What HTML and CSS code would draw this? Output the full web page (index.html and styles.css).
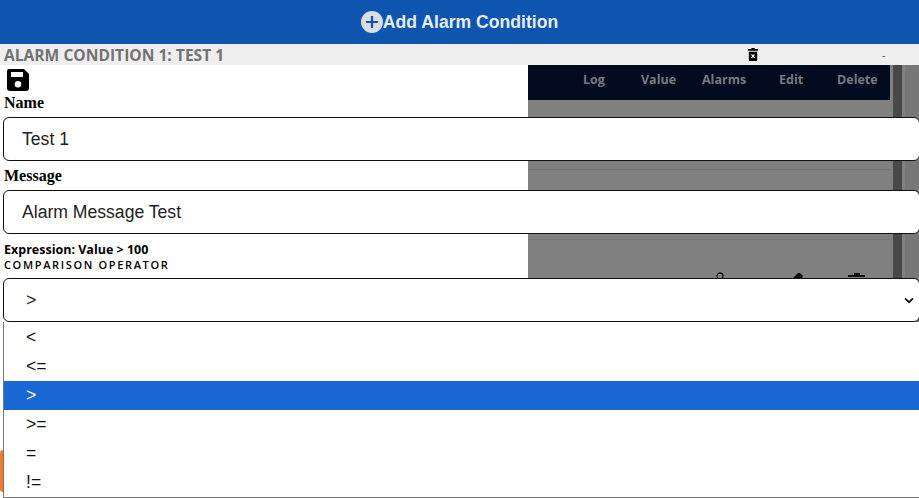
FILE: index.html
```html
<!DOCTYPE html>
<html lang="en">
<head>
  <meta charset="UTF-8">
  <meta name="viewport" content="width=device-width, initial-scale=1.0">
  <title>Add Alarm Condition</title>
  <link rel="stylesheet" href="styles.css">
</head>
<body>
  <div class="add-bar">
    <svg class="add-icon" viewBox="0 0 24 24" width="22" height="22">
      <circle cx="12" cy="12" r="12" fill="#d9dde3"/>
      <path d="M12 5.500v13M5.500 12h13" stroke="#0d55ae" stroke-width="2.400" fill="none"/>
    </svg>
    <span>Add Alarm Condition</span>
  </div>

  <div class="condition-bar">
    <span class="condition-title">ALARM CONDITION 1: TEST 1</span>
    <svg class="condition-delete" viewBox="0 0 12 14" width="10" height="13" preserveAspectRatio="none">
      <path d="M4 0h4v1h4v2H0V1h4z" fill="#000"/>
      <path d="M1 4h10v9a1 1 0 0 1-1 1H2a1 1 0 0 1-1-1z" fill="#000"/>
      <path d="M4.200 7l3.600 3.600M7.800 7l-3.600 3.600" stroke="#fff" stroke-width="1.400"/>
    </svg>
    <span class="condition-collapse">-</span>
  </div>

  <div class="content">
    <!-- dimmed page behind the form -->
    <div class="backdrop">
      <div class="table-head">
        <span class="col-log">Log</span>
        <span class="col-value">Value</span>
        <span class="col-alarms">Alarms</span>
        <span class="col-edit">Edit</span>
        <span class="col-delete">Delete</span>
      </div>
      <div class="row-line line-one"></div>
      <div class="row-line line-two"></div>
      <div class="scroll-track"></div>
      <div class="scroll-side"></div>
      <svg class="row-icons" viewBox="0 0 150 8" width="150" height="8">
        <circle cx="4" cy="5" r="3" fill="none" stroke="#111" stroke-width="1.300"/>
        <path d="M77 7l5-5h2l3 3-1 2z" fill="#111"/>
        <path d="M132 4h17v2h-17zM138 2h6v2h-6z" fill="#111"/>
      </svg>
    </div>
    <div class="orange-tab"></div>

    <form class="form">
      <svg class="save-icon" viewBox="0 0 24 24" width="24" height="24">
        <path fill-rule="evenodd" d="M3 1h15l5 5v14a3 3 0 0 1-3 3H4a3 3 0 0 1-3-3V3a2 2 0 0 1 2-2zM5 4v5h12V4zM12 13a3.300 3.300 0 1 0 0 6.600a3.300 3.300 0 0 0 0-6.600z" fill="#000"/>
      </svg>
      <label class="field-label">Name</label>
      <div class="text-box">Test 1</div>
      <label class="field-label label-message">Message</label>
      <div class="text-box">Alarm Message Test</div>
      <div class="expression">Expression: Value &gt; 100</div>
      <div class="operator-label">COMPARISON OPERATOR</div>
      <div class="select-box">
        <span>&gt;</span>
        <svg class="chevron" viewBox="0 0 12 8" width="10" height="7">
          <path d="M1.200 1.500L6 6l4.800-4.500" fill="none" stroke="#111" stroke-width="2.200"/>
        </svg>
      </div>
      <ul class="options">
        <li>&lt;</li>
        <li>&lt;=</li>
        <li class="selected">&gt;</li>
        <li>&gt;=</li>
        <li>=</li>
        <li>!=</li>
      </ul>
    </form>
  </div>
</body>
</html>
```

FILE: styles.css
```css
html, body {
  margin: 0;
  height: 498px;
  overflow: hidden;
  background-color: #fff;
}

body {
  font-family: "Liberation Sans", Arial, sans-serif;
  width: 919px;
}

.add-bar {
  height: 44px;
  display: flex;
  justify-content: center;
  align-items: center;
  background-color: #0d55ae;
  color: #e8eef6;
  font-size: 17.6px;
  font-weight: bold;
}

.add-icon {
  display: block;
}

.condition-bar {
  height: 21px;
  display: flex;
  align-items: center;
  background-color: #eee;
  padding-left: 4px;
}

.condition-title {
  width: 744px;
  font-family: "Open Sans", sans-serif;
  font-size: 15.6px;
  font-weight: 700;
  color: #727272;
  white-space: nowrap;
}

.condition-delete {
  display: block;
}

.condition-collapse {
  margin-left: 124px;
  font-size: 11px;
  color: #555;
}

.content {
  position: relative;
  height: 433px;
}

.backdrop {
  position: absolute;
  top: 0;
  bottom: 0;
  left: 528px;
  right: 0;
  background-color: #808080;
}

.table-head {
  position: relative;
  width: 362px;
  height: 35px;
  background-color: #020a20;
  font-family: "Open Sans", sans-serif;
  font-size: 12.500px;
  font-weight: 700;
  line-height: 29px;
  color: #777a84;
}

.table-head span {
  position: absolute;
  top: 0;
}

.col-log { left: 55px; }
.col-value { left: 113px; }
.col-alarms { left: 174px; }
.col-edit { left: 251px; }
.col-delete { left: 309px; }

.row-line {
  position: absolute;
  left: 0;
  width: 362px;
  height: 1px;
  background-color: #747474;
}

.line-one { top: 104px; }
.line-two { top: 174px; }

.scroll-track {
  position: absolute;
  top: 0;
  bottom: 0;
  left: 365px;
  width: 9px;
  background-color: #484848;
}

.scroll-side {
  position: absolute;
  top: 0;
  bottom: 0;
  left: 377px;
  right: 0;
  background-color: #777;
}

.row-icons {
  position: absolute;
  top: 206px;
  left: 188px;
}

.orange-tab {
  position: absolute;
  left: 0;
  top: 385px;
  width: 6px;
  height: 42px;
  border-radius: 4px;
  background-color: #f47a2a;
}

.form {
  position: relative;
  width: 917px;
  margin: 0;
  padding-left: 3px;
}

.save-icon {
  display: block;
  margin-left: 3px;
  padding-top: 3px;
}

.field-label {
  display: block;
  height: 16px;
  margin: 3px 0 6px;
  padding-left: 1px;
  font-family: "Liberation Serif", "Times New Roman", serif;
  font-size: 16px;
  font-weight: bold;
  line-height: 16px;
  color: #000;
}

.label-message {
  margin-top: 7px;
}

.text-box {
  box-sizing: border-box;
  height: 44px;
  padding-left: 18px;
  border: 1px solid #111;
  border-radius: 6px;
  background-color: #fff;
  font-size: 17.6px;
  line-height: 42px;
  color: #222;
}

.expression {
  margin-top: 8px;
  height: 15px;
  padding-left: 1px;
  font-family: "Open Sans", sans-serif;
  font-size: 12.500px;
  font-weight: 700;
  line-height: 16px;
  color: #000;
}

.operator-label {
  height: 21px;
  padding-left: 1px;
  font-family: "Open Sans", sans-serif;
  font-size: 11px;
  font-weight: 600;
  letter-spacing: 1.650px;
  line-height: 16px;
  color: #000;
}

.select-box {
  box-sizing: border-box;
  height: 44px;
  display: flex;
  align-items: center;
  justify-content: space-between;
  padding: 0 5px 0 22px;
  border: 1px solid #111;
  border-radius: 6px;
  background-color: #fff;
  font-size: 17.6px;
  color: #222;
}

.options {
  box-sizing: border-box;
  list-style: none;
  margin: 0;
  padding: 1px 0 0;
  border-left: 1px solid #777;
  border-bottom: 1px solid #777;
  background-color: #fff;
  font-size: 17.6px;
  color: #111;
}

.options li {
  height: 29px;
  padding-left: 22px;
  line-height: 29px;
}

.options .selected {
  background-color: #1967d2;
  color: #fff;
}
```
